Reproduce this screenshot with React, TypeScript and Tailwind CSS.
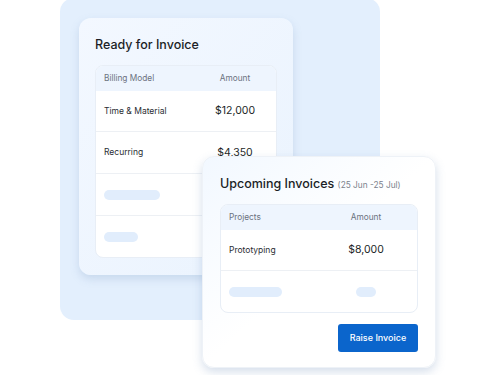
import React from "react";

const font = { fontFamily: "Inter, 'Noto Sans', sans-serif" };

const Skeleton = ({ w }: { w: string }) => (
  <div className={`h-[10px] rounded-full bg-[#e1edfc] ${w}`} />
);

const App: React.FC = () => {
  return (
    <div className="relative h-[375px] w-[500px] overflow-hidden bg-white" style={font}>
      {/* backdrop panel */}
      <div className="absolute left-[60px] top-[-2px] h-[322px] w-[320px] rounded-[14px] bg-[#e3effd]" />

      {/* ready for invoice card */}
      <div className="absolute left-[79px] top-[18px] flex h-[257px] w-[214px] flex-col rounded-[12px] bg-gradient-to-br from-[#f3f8ff] to-[#eaf3fe] px-[16px] pt-[19px] shadow-[0_4px_8px_rgba(120,150,190,0.25)]">
        <h2 className="text-[12.5px] font-medium leading-[15px] text-[#1c1f26]">
          Ready for Invoice
        </h2>
        <div className="mt-[13px] overflow-hidden rounded-[8px] border border-[#e8eef6] bg-white">
          <div className="flex h-[25px] items-center bg-[#eef5fe] pl-[8px] text-[8.3px] text-[#6b7280]">
            <span className="flex-1">Billing Model</span>
            <span className="w-[82px] text-center">Amount</span>
          </div>
          <div className="flex h-[41px] items-center border-b border-[#edf0f4] pl-[8px] text-[8.5px] text-[#2a2d33]">
            <span className="flex-1">Time &amp; Material</span>
            <span className="w-[82px] text-center text-[10.5px] text-[#1c1f26]">$12,000</span>
          </div>
          <div className="flex h-[42px] items-center border-b border-[#edf0f4] pl-[8px] text-[8.5px] text-[#2a2d33]">
            <span className="flex-1">Recurring</span>
            <span className="w-[82px] text-center text-[10.5px] text-[#1c1f26]">$4,350</span>
          </div>
          <div className="flex h-[42px] items-center border-b border-[#edf0f4] pl-[8px]">
            <Skeleton w="w-[56px]" />
          </div>
          <div className="flex h-[41px] items-center pl-[8px]">
            <Skeleton w="w-[34px]" />
          </div>
        </div>
      </div>

      {/* upcoming invoices card */}
      <div className="absolute left-[202px] top-[156px] flex h-[212px] w-[234px] flex-col rounded-[12px] border border-[#eef2f7] bg-gradient-to-br from-[#f2f8ff] via-white to-white px-[17px] pt-[19px] shadow-[0_4px_10px_rgba(120,150,190,0.3)]">
        <h2 className="text-[12.5px] font-medium leading-[15px] text-[#1c1f26]">
          Upcoming Invoices{" "}
          <span className="text-[8.3px] font-normal text-[#7b818c]">(25 Jun -25 Jul)</span>
        </h2>
        <div className="mt-[11px] overflow-hidden rounded-[8px] border border-[#e8eef6] bg-white">
          <div className="flex h-[25px] items-center bg-[#eef5fe] pl-[8px] text-[8.3px] text-[#6b7280]">
            <span className="flex-1">Projects</span>
            <span className="w-[102px] text-center">Amount</span>
          </div>
          <div className="flex h-[41px] items-center border-b border-[#edf0f4] pl-[8px] text-[8.5px] text-[#2a2d33]">
            <span className="flex-1">Prototyping</span>
            <span className="w-[102px] text-center text-[10.5px] text-[#1c1f26]">$8,000</span>
          </div>
          <div className="flex h-[41px] items-center pl-[8px]">
            <div className="flex-1">
              <Skeleton w="w-[53px]" />
            </div>
            <div className="flex w-[102px] justify-center">
              <Skeleton w="w-[20px]" />
            </div>
          </div>
        </div>
        <div className="mt-[11px] flex justify-end">
          <button className="h-[28px] w-[80px] rounded-[3px] bg-[#0b65cc] text-[9px] font-medium text-white">
            Raise Invoice
          </button>
        </div>
      </div>
    </div>
  );
};

export default App;
